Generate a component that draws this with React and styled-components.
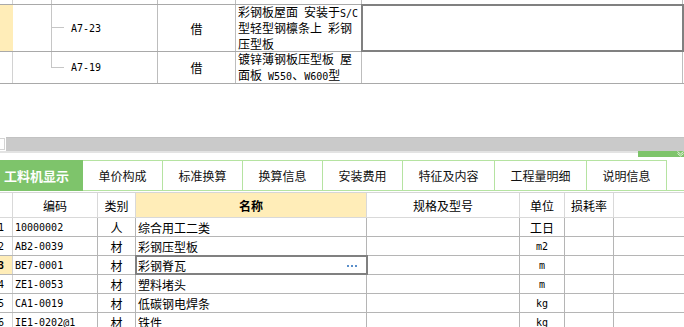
import React from "react";
import styled, { createGlobalStyle, css } from "styled-components";

const Global = createGlobalStyle`
  html, body { margin: 0; padding: 0; background: #fff; }
  body {
    width: 684px; height: 327px; overflow: hidden;
    font-family: "Noto Sans CJK SC", "Noto Sans", sans-serif;
    font-size: 12px; color: #000;
  }
  #root { width: 684px; height: 327px; overflow: hidden; }
`;

const Page = styled.div`
  display: flex;
  flex-direction: column;
  width: 684px;
`;

const TopGrid = styled.div`
  margin-top: -28px;
  display: flex;
  flex-direction: column;
`;

const Row = styled.div`
  display: flex;
  flex-shrink: 0;
  box-sizing: border-box;
  height: ${(p) => p.$h}px;
  border-bottom: 1px solid ${(p) => p.$line || "#a9a9a9"};
`;

const Cell = styled.div`
  box-sizing: border-box;
  width: ${(p) => (p.$w ? `${p.$w}px` : "auto")};
  flex: ${(p) => (p.$w ? "none" : "1")};
  border-right: 1px solid ${(p) => p.$line || "#bdbdbd"};
  background: ${(p) => p.$bg || "transparent"};
  display: flex;
  align-items: ${(p) => p.$valign || "center"};
  justify-content: ${(p) =>
    p.$align === "center" ? "center" : p.$align === "between" ? "space-between" : "flex-start"};
  padding: 0 ${(p) => (p.$pad ?? 2)}px;
  overflow: hidden;
  white-space: nowrap;
  position: relative;
  font-weight: ${(p) => (p.$bold ? 700 : 400)};
  ${(p) =>
    p.$selected &&
    css`
      outline: 2px solid #808080;
      outline-offset: -1px;
      z-index: 1;
    `}
`;

const Lines = styled.div`
  line-height: 14px;
  white-space: nowrap;
  padding-bottom: ${(p) => p.$pb || 0}px;
`;

const Latin = styled.span`
  font-family: "DejaVu Sans Mono", "Liberation Mono", monospace;
  font-size: 10px;
  font-weight: ${(p) => (p.$bold ? 700 : 400)};
  white-space: pre;
`;

const Indent = styled.div`
  width: 38px;
  flex: none;
`;

const Branch = styled.div`
  position: relative;
  width: 13px;
  flex: none;
  align-self: stretch;
  margin-right: 7px;
  &::before {
    content: "";
    position: absolute;
    left: 0;
    top: 0;
    bottom: ${(p) => (p.$last ? "50%" : "0")};
    border-left: 1px solid #c6c6c6;
  }
  &::after {
    content: "";
    position: absolute;
    left: 0;
    top: calc(50% - 1px);
    width: 13px;
    border-top: 1px solid #c6c6c6;
  }
`;

const Blank = styled.div`
  height: 53px;
  flex: none;
`;

const ScrollTrack = styled.div`
  display: flex;
  height: 14px;
  flex: none;
`;

const ScrollCap = styled.div`
  width: 5px;
  box-sizing: border-box;
  margin: 1px 0;
  background: #fff;
  border: 1px solid #d4d4d4;
  border-left: none;
`;

const ScrollThumb = styled.div`
  flex: 1;
  margin-left: 1px;
  background: #cacaca;
  border-top: 1px solid #c2c2c2;
`;

const Strip = styled.div`
  display: flex;
  height: 6px;
  flex: none;
`;

const StripFill = styled.div`
  flex: 1;
  height: 2px;
  background: #e3e3e3;
`;

const GreenBox = styled.div`
  width: 46px;
  background: #7ec46b;
  display: flex;
  justify-content: flex-end;
  align-items: flex-start;
`;

const Gap = styled.div`
  height: ${(p) => p.$h}px;
  flex: none;
`;

const TabBar = styled.div`
  display: flex;
  box-sizing: border-box;
  height: 31px;
  flex: none;
  border-bottom: 1px solid #b5e3a1;
`;

const Tab = styled.div`
  box-sizing: border-box;
  width: ${(p) => p.$w}px;
  height: 30px;
  flex: none;
  border-top: 1px solid #b5e3a1;
  border-right: 1px solid #b5e3a1;
  display: flex;
  align-items: center;
  justify-content: center;
  font-size: 12px;
  color: #111;
`;

const ActiveTab = styled.div`
  box-sizing: border-box;
  width: 83px;
  height: 31px;
  margin-bottom: -1px;
  flex: none;
  background: #7ec46b;
  color: #fff;
  font-weight: 700;
  font-size: 13px;
  display: flex;
  align-items: center;
  padding-left: 4px;
`;

const BottomGrid = styled.div`
  display: flex;
  flex-direction: column;
  border-top: 1px solid #d6d6d6;
`;

const Dots = () => (
  <svg width="11" height="3" viewBox="0 0 11 3">
    <rect x="0" y="0" width="2" height="2" fill="#5a8fca" />
    <rect x="4" y="0" width="2" height="2" fill="#5a8fca" />
    <rect x="8" y="0" width="2" height="2" fill="#5a8fca" />
  </svg>
);

const DotsWrap = styled.span`
  display: flex;
  margin-right: 6px;
  margin-top: 2px;
`;

const RowNum = styled.span`
  margin-left: -2px;
  font-family: "DejaVu Sans Mono", "Liberation Mono", monospace;
  font-size: 10px;
  font-weight: ${(p) => (p.$bold ? 700 : 400)};
`;

const Chevron = () => (
  <svg width="7" height="6" viewBox="0 0 7 6">
    <polyline points="0.5,0.5 3.5,3 6.5,0.5" fill="none" stroke="#e6f5e0" strokeWidth="1" />
    <polyline points="0.5,2.5 3.5,5 6.5,2.5" fill="none" stroke="#e6f5e0" strokeWidth="1" />
  </svg>
);

const YELLOW = "#ffedb8";
const TOPW = [13, 145, 78, 126, 321];

const TopRow = ({ h, yellow, code, last, lines, selected, pb, valign }) => (
  <Row $h={h}>
    <Cell $w={TOPW[0]} $bg={yellow ? YELLOW : undefined} $line={yellow ? YELLOW : "#d2d2d2"} />
    <Cell $w={TOPW[1]} $pad={0}>
      <Indent />
      <Branch $last={last} />
      <Latin>{code}</Latin>
    </Cell>
    <Cell $w={TOPW[2]} $align="center">借</Cell>
    <Cell $w={TOPW[3]} $valign={valign}>
      <Lines $pb={pb}>{lines}</Lines>
    </Cell>
    <Cell $w={TOPW[4]} $selected={selected} $line="#bdbdbd" />
    <Cell $line="transparent" />
  </Row>
);

const tabs = [
  ["单价构成", 80],
  ["标准换算", 80],
  ["换算信息", 80],
  ["安装费用", 80],
  ["特征及内容", 92],
  ["工程量明细", 92],
  ["说明信息", 80],
];

const BW = [13, 85, 38, 231, 153, 45, 49];
const HL = "#d9d9d9";
const DL = "#b5b5b5";

const rows = [
  { n: "1", code: "10000002", type: "人", name: "综合用工二类", unit: "工日", cjkUnit: true },
  { n: "2", code: "AB2-0039", type: "材", name: "彩钢压型板", unit: "m2" },
  { n: "3", code: "BE7-0001", type: "材", name: "彩钢脊瓦", unit: "m", sel: true },
  { n: "4", code: "ZE1-0053", type: "材", name: "塑料堵头", unit: "m" },
  { n: "5", code: "CA1-0019", type: "材", name: "低碳钢电焊条", unit: "kg" },
  { n: "6", code: "IE1-0202@1", type: "材", name: "铁件", unit: "kg" },
];

export default function App() {
  return (
    <>
      <Global />
      <Page>
        <TopGrid>
          <TopRow
            h={33}
            code="A7-21"
            valign="flex-end"
            pb={1}
            lines={
              <>
                镀锌薄钢板压型板<Latin> </Latin>墙<br />
                面板<Latin> W550</Latin>、<Latin>W600</Latin>型
              </>
            }
          />
          <TopRow
            h={47}
            yellow
            code="A7-23"
            selected
            lines={
              <>
                彩钢板屋面<Latin> </Latin>安装于<Latin>S/C</Latin>
                <br />
                型轻型钢檩条上<Latin> </Latin>彩钢
                <br />
                压型板
              </>
            }
          />
          <TopRow
            h={32}
            code="A7-19"
            last
            lines={
              <>
                镀锌薄钢板压型板<Latin> </Latin>屋<br />
                面板<Latin> W550</Latin>、<Latin>W600</Latin>型
              </>
            }
          />
        </TopGrid>

        <Blank />

        <ScrollTrack>
          <ScrollCap />
          <ScrollThumb />
        </ScrollTrack>

        <Strip>
          <StripFill />
          <GreenBox>
            <Chevron />
          </GreenBox>
        </Strip>

        <Gap $h={3} />

        <TabBar>
          <ActiveTab>工料机显示</ActiveTab>
          {tabs.map(([t, w]) => (
            <Tab key={t} $w={w}>
              {t}
            </Tab>
          ))}
        </TabBar>

        <Gap $h={1} />

        <BottomGrid>
          <Row $h={25} $line={HL}>
            <Cell $w={BW[0]} $line={HL} />
            <Cell $w={BW[1]} $line={HL} $align="center">编码</Cell>
            <Cell $w={BW[2]} $line={HL} $align="center">类别</Cell>
            <Cell $w={BW[3]} $line={HL} $align="center" $bg={YELLOW} $bold>名称</Cell>
            <Cell $w={BW[4]} $line={HL} $align="center">规格及型号</Cell>
            <Cell $w={BW[5]} $line={HL} $align="center">单位</Cell>
            <Cell $w={BW[6]} $line={HL} $align="center">损耗率</Cell>
            <Cell $line="transparent" />
          </Row>
          {rows.map((r) => (
            <Row key={r.n} $h={19} $line={DL}>
              <Cell $w={BW[0]} $line="#d2d2d2" $pad={0} $bg={r.sel ? YELLOW : undefined}>
                <RowNum $bold={r.sel}>{r.n}</RowNum>
              </Cell>
              <Cell $w={BW[1]} $line={DL}>
                <Latin>{r.code}</Latin>
              </Cell>
              <Cell $w={BW[2]} $line={DL} $align="center">{r.type}</Cell>
              <Cell $w={BW[3]} $line={DL} $align={r.sel ? "between" : undefined} $selected={r.sel}>
                <span>{r.name}</span>
                {r.sel && (
                  <DotsWrap>
                    <Dots />
                  </DotsWrap>
                )}
              </Cell>
              <Cell $w={BW[4]} $line={DL} />
              <Cell $w={BW[5]} $line={DL} $align="center">
                {r.cjkUnit ? r.unit : <Latin>{r.unit}</Latin>}
              </Cell>
              <Cell $w={BW[6]} $line={DL} />
              <Cell $line="transparent" />
            </Row>
          ))}
        </BottomGrid>
      </Page>
    </>
  );
}
